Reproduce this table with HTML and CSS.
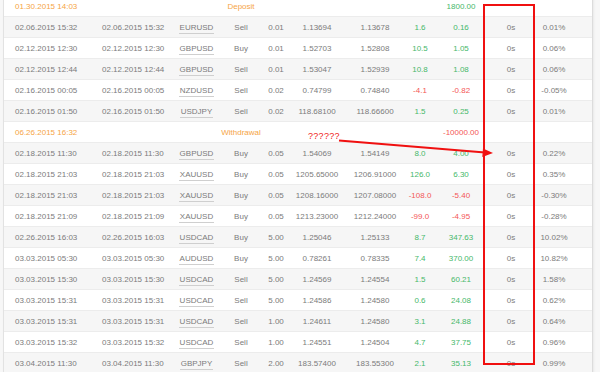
FILE: index.html
```html
<!DOCTYPE html>
<html>
<head>
    <title>Trading History</title>
    <meta charset="UTF-8">
    <link rel="stylesheet" href="styles.css">
</head>
<body>
    <div class="history">
        <table>
            <colgroup>
                <col class="c-open"><col class="c-close"><col class="c-sym"><col class="c-type">
                <col class="c-lots"><col class="c-price"><col class="c-price"><col class="c-pips">
                <col class="c-profit"><col class="c-dur"><col class="c-gain"><col class="c-end">
            </colgroup>
            <tbody>
                <tr class="balance">
                    <td class="time orange">01.30.2015 14:03</td><td></td><td></td>
                    <td class="orange">Deposit</td><td></td><td></td><td></td><td></td>
                    <td class="up">1800.00</td><td></td><td></td><td></td>
                </tr>
                <tr>
                    <td class="time">02.06.2015 15:32</td><td class="time">02.06.2015 15:32</td>
                    <td><span class="sym">EURUSD</span></td><td>Sell</td><td>0.01</td>
                    <td>1.13694</td><td>1.13678</td><td class="up">1.6</td><td class="up">0.16</td>
                    <td>0s</td><td>0.01%</td><td></td>
                </tr>
                <tr>
                    <td class="time">02.12.2015 12:30</td><td class="time">02.12.2015 12:30</td>
                    <td><span class="sym">GBPUSD</span></td><td>Buy</td><td>0.01</td>
                    <td>1.52703</td><td>1.52808</td><td class="up">10.5</td><td class="up">1.05</td>
                    <td>0s</td><td>0.06%</td><td></td>
                </tr>
                <tr>
                    <td class="time">02.12.2015 12:44</td><td class="time">02.12.2015 12:44</td>
                    <td><span class="sym">GBPUSD</span></td><td>Sell</td><td>0.01</td>
                    <td>1.53047</td><td>1.52939</td><td class="up">10.8</td><td class="up">1.08</td>
                    <td>0s</td><td>0.06%</td><td></td>
                </tr>
                <tr>
                    <td class="time">02.16.2015 00:05</td><td class="time">02.16.2015 00:05</td>
                    <td><span class="sym">NZDUSD</span></td><td>Sell</td><td>0.02</td>
                    <td>0.74799</td><td>0.74840</td><td class="down">-4.1</td><td class="down">-0.82</td>
                    <td>0s</td><td>-0.05%</td><td></td>
                </tr>
                <tr>
                    <td class="time">02.16.2015 01:50</td><td class="time">02.16.2015 01:50</td>
                    <td><span class="sym">USDJPY</span></td><td>Sell</td><td>0.02</td>
                    <td>118.68100</td><td>118.66600</td><td class="up">1.5</td><td class="up">0.25</td>
                    <td>0s</td><td>0.01%</td><td></td>
                </tr>
                <tr class="balance">
                    <td class="time orange">06.26.2015 16:32</td><td></td><td></td>
                    <td class="orange">Withdrawal</td><td></td><td></td><td></td><td></td>
                    <td class="down">-10000.00</td><td></td><td></td><td></td>
                </tr>
                <tr>
                    <td class="time">02.18.2015 11:30</td><td class="time">02.18.2015 11:30</td>
                    <td><span class="sym">GBPUSD</span></td><td>Buy</td><td>0.05</td>
                    <td>1.54069</td><td>1.54149</td><td class="up">8.0</td><td class="up">4.00</td>
                    <td>0s</td><td>0.22%</td><td></td>
                </tr>
                <tr>
                    <td class="time">02.18.2015 21:03</td><td class="time">02.18.2015 21:03</td>
                    <td><span class="sym">XAUUSD</span></td><td>Buy</td><td>0.05</td>
                    <td>1205.65000</td><td>1206.91000</td><td class="up">126.0</td><td class="up">6.30</td>
                    <td>0s</td><td>0.35%</td><td></td>
                </tr>
                <tr>
                    <td class="time">02.18.2015 21:03</td><td class="time">02.18.2015 21:03</td>
                    <td><span class="sym">XAUUSD</span></td><td>Buy</td><td>0.05</td>
                    <td>1208.16000</td><td>1207.08000</td><td class="down">-108.0</td><td class="down">-5.40</td>
                    <td>0s</td><td>-0.30%</td><td></td>
                </tr>
                <tr>
                    <td class="time">02.18.2015 21:09</td><td class="time">02.18.2015 21:09</td>
                    <td><span class="sym">XAUUSD</span></td><td>Buy</td><td>0.05</td>
                    <td>1213.23000</td><td>1212.24000</td><td class="down">-99.0</td><td class="down">-4.95</td>
                    <td>0s</td><td>-0.28%</td><td></td>
                </tr>
                <tr>
                    <td class="time">02.26.2015 16:03</td><td class="time">02.26.2015 16:03</td>
                    <td><span class="sym">USDCAD</span></td><td>Buy</td><td>5.00</td>
                    <td>1.25046</td><td>1.25133</td><td class="up">8.7</td><td class="up">347.63</td>
                    <td>0s</td><td>10.02%</td><td></td>
                </tr>
                <tr>
                    <td class="time">03.03.2015 05:30</td><td class="time">03.03.2015 05:30</td>
                    <td><span class="sym">AUDUSD</span></td><td>Buy</td><td>5.00</td>
                    <td>0.78261</td><td>0.78335</td><td class="up">7.4</td><td class="up">370.00</td>
                    <td>0s</td><td>10.82%</td><td></td>
                </tr>
                <tr>
                    <td class="time">03.03.2015 15:30</td><td class="time">03.03.2015 15:30</td>
                    <td><span class="sym">USDCAD</span></td><td>Sell</td><td>5.00</td>
                    <td>1.24569</td><td>1.24554</td><td class="up">1.5</td><td class="up">60.21</td>
                    <td>0s</td><td>1.58%</td><td></td>
                </tr>
                <tr>
                    <td class="time">03.03.2015 15:31</td><td class="time">03.03.2015 15:31</td>
                    <td><span class="sym">USDCAD</span></td><td>Sell</td><td>5.00</td>
                    <td>1.24586</td><td>1.24580</td><td class="up">0.6</td><td class="up">24.08</td>
                    <td>0s</td><td>0.62%</td><td></td>
                </tr>
                <tr>
                    <td class="time">03.03.2015 15:31</td><td class="time">03.03.2015 15:31</td>
                    <td><span class="sym">USDCAD</span></td><td>Sell</td><td>1.00</td>
                    <td>1.24611</td><td>1.24580</td><td class="up">3.1</td><td class="up">24.88</td>
                    <td>0s</td><td>0.64%</td><td></td>
                </tr>
                <tr>
                    <td class="time">03.03.2015 15:32</td><td class="time">03.03.2015 15:32</td>
                    <td><span class="sym">USDCAD</span></td><td>Sell</td><td>1.00</td>
                    <td>1.24551</td><td>1.24504</td><td class="up">4.7</td><td class="up">37.75</td>
                    <td>0s</td><td>0.96%</td><td></td>
                </tr>
                <tr>
                    <td class="time">03.04.2015 11:30</td><td class="time">03.04.2015 11:30</td>
                    <td><span class="sym">GBPJPY</span></td><td>Sell</td><td>2.00</td>
                    <td>183.57400</td><td>183.55300</td><td class="up">2.1</td><td class="up">35.13</td>
                    <td>0s</td><td>0.99%</td><td></td>
                </tr>
            </tbody>
        </table>

        <!-- annotation drawn over the screenshot -->
        <div class="mark-box"></div>
        <div class="mark-note">??????</div>
        <svg class="mark-arrow" width="600" height="372" viewBox="0 0 600 372">
            <line x1="339" y1="140.5" x2="485" y2="152.4" stroke="#f01010" stroke-width="2"/>
            <polygon points="493,153 483,148.6 482.3,157" fill="#f01010"/>
        </svg>
    </div>
</body>
</html>
```

FILE: styles.css
```css
body {
    margin: 0;
    background-color: #f7f7f7;
    font-family: "Liberation Sans", Arial, sans-serif;
    font-size: 8px;
    color: #7b7b7b;
}
.history {
    position: relative;
    height: 372px;
    overflow: hidden;
}
table {
    margin: -4px 0 0 3px;
    width: 590px;
    border-collapse: separate;
    border-spacing: 0;
    table-layout: fixed;
    background-color: white;
    border-left: 1px solid #e2e2e2;
    border-right: 1px solid #dcdcdc;
    box-shadow: 1px 0 2px rgba(0,0,0,0.06);
}
td {
    height: 20px;
    padding: 0;
    text-align: center;
    white-space: nowrap;
    border-bottom: 1px solid #ececec;
}
tr:nth-child(even) td {
    background-color: #f6f6f6;
}
td.time {
    text-align: left;
    padding-left: 11px;
}
td.time + td.time {
    padding-left: 12px;
}
.c-open { width: 86px; }
.c-close { width: 85px; }
.c-sym { width: 43px; }
.c-type { width: 46px; }
.c-lots { width: 24px; }
.c-price { width: 58px; }
.c-pips { width: 32px; }
.c-profit { width: 50px; }
.c-dur { width: 50px; }
.c-gain { width: 36px; }
.c-end { width: 20px; }

.sym {
    border-bottom: 1px solid #cfcfcf;
    padding: 0 1px 1px;
}
.orange { color: #f6a545; }
.up { color: #46b86a; }
.down { color: #f45656; }

.mark-box {
    position: absolute;
    left: 483px;
    top: 4px;
    width: 48px;
    height: 357px;
    border: 2px solid #f01010;
}
.mark-note {
    position: absolute;
    left: 308px;
    top: 131px;
    font-size: 9px;
    letter-spacing: 0.3px;
    color: #f02020;
}
.mark-arrow {
    position: absolute;
    left: 0;
    top: 0;
}
```
